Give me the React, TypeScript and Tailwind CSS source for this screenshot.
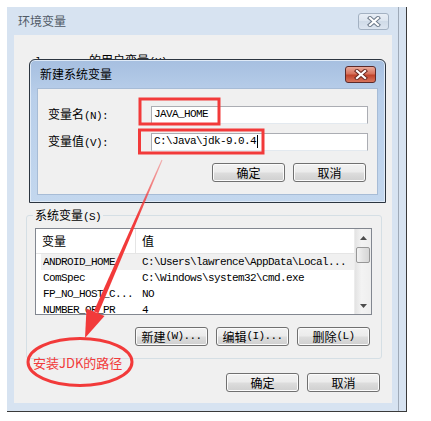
import React from 'react';

const cjk = "font-[family-name:'Noto_Sans_CJK_SC',sans-serif]";
const mono = "font-[family-name:'Liberation_Mono','Noto_Sans_CJK_SC',monospace] text-[11px] tracking-[-0.6px]";

function Btn({ label, keys }: { label: string; keys?: string }) {
  return (
    <div className="flex h-[19px] w-[73px] items-center justify-center rounded-[3px] border border-[#707070] bg-[linear-gradient(#f2f2f2,#ebebeb_48%,#dddddd_52%,#cfcfcf)] text-[12px] leading-none text-black shadow-[inset_0_0_0_1px_#fbfbfb]">
      <span>{label}</span>
      {keys && <span className={mono}>{keys}</span>}
    </div>
  );
}

function CloseX({ red }: { red?: boolean }) {
  return (
    <div
      className={
        red
          ? 'flex h-[17px] w-[31px] items-center justify-center rounded-[3px] border border-[#5b2a2a] bg-[linear-gradient(#e9a99a,#d7725c_45%,#c0432b_55%,#d8745c)]'
          : 'flex h-[17px] w-[31px] items-center justify-center rounded-[3px] border border-[#a3b1c2] bg-[linear-gradient(#e8eef6,#dbe4ef_50%,#d0dbe8_50%,#dce5f0)]'
      }
    >
      <svg width="14" height="11" viewBox="0 0 14 11">
        <path d="M3 2 L11 9 M11 2 L3 9" stroke={red ? '#6a2a22' : '#6f7c8c'} strokeWidth="4.2" strokeLinecap="square" />
        <path d="M3 2 L11 9 M11 2 L3 9" stroke="#ffffff" strokeWidth="2.2" strokeLinecap="square" />
      </svg>
    </div>
  );
}

const rows = [
  ['ANDROID_HOME', 'C:\\Users\\lawrence\\AppData\\Local...'],
  ['ComSpec', 'C:\\Windows\\system32\\cmd.exe'],
  ['FP_NO_HOST_C...', 'NO'],
  ['NUMBER_OF_PR', '4'],
];

function VarList() {
  return (
    <div className="ml-[8px] mt-[5px] flex h-[87px] w-[337px] border border-[#828790] bg-white">
      <div className="flex min-w-0 flex-1 flex-col overflow-hidden">
        <div className="flex h-[25px] shrink-0 items-center border-b border-[#e5e5e5] text-[12px] text-black">
          <div className="flex h-full w-[100px] items-center border-r border-[#e5e5e5] pl-[6px]">变量</div>
          <div className="pl-[6px]">值</div>
        </div>
        <div className="pl-[5px]">
          {rows.map(([k, v], i) => (
            <div
              key={k}
              className={`flex h-[16px] items-center whitespace-nowrap pl-[2px] text-black ${mono} ${
                i === 0 ? 'bg-[#f0f0f0]' : ''
              }`}
            >
              <div className="w-[99px] overflow-hidden">{k}</div>
              <div>{v}</div>
            </div>
          ))}
        </div>
      </div>
      <div className="flex w-[17px] shrink-0 flex-col border-l border-[#ececec] bg-[linear-gradient(90deg,#e3e3e3,#f3f3f3_40%,#eeeeee)]">
        <div className="flex h-[18px] items-center justify-center">
          <svg width="7" height="4" viewBox="0 0 7 4"><path d="M0 4 L3.5 0 L7 4Z" fill="#4d4d4d" /></svg>
        </div>
        <div className="mx-[1px] h-[16px] rounded-[2px] border border-[#979797] bg-[linear-gradient(90deg,#f3f3f3,#e2e2e2_50%,#d6d6d6)]" />
        <div className="flex-1" />
        <div className="flex h-[17px] items-center justify-center">
          <svg width="7" height="4" viewBox="0 0 7 4"><path d="M0 0 L3.5 4 L7 0Z" fill="#4d4d4d" /></svg>
        </div>
      </div>
    </div>
  );
}

function NewVarDialog() {
  return (
    <div className="absolute left-[29px] top-[59px] flex h-[144px] w-[357px] flex-col rounded-t-[6px] border border-[#2c3540] bg-[linear-gradient(#a6bfe0,#b9cfea_25%,#c3d7ee)] shadow-[inset_0_0_0_1px_#dfeaf7]">
      <div className="flex h-[28px] shrink-0 items-center justify-between pl-[10px] pr-[9px]">
        <span className="text-[12px] text-black">新建系统变量</span>
        <CloseX red />
      </div>
      <div className="mx-[7px] mb-[7px] flex flex-1 flex-col border border-[#a7bcd6] bg-[#f0f0f0] text-[12px] text-black">
        <div className="mt-[17px] flex h-[17px] items-center">
          <div className="w-[113px] pl-[10px]">
            变量名<span className={mono}>(N):</span>
          </div>
          <div className="flex h-[18px] w-[217px] items-center border border-[#abadb3] border-b-[#e3e9ef] bg-white pl-[2px]">
            <span className={mono}>JAVA_HOME</span>
          </div>
        </div>
        <div className="mt-[10px] flex h-[17px] items-center">
          <div className="w-[113px] pl-[10px]">
            变量值<span className={mono}>(V):</span>
          </div>
          <div className="flex h-[18px] w-[217px] items-center border border-[#abadb3] border-b-[#e3e9ef] bg-white pl-[2px]">
            <span className={mono}>C:\Java\jdk-9.0.4</span>
            <span className="ml-[1px] h-[13px] w-[1px] bg-black" />
          </div>
        </div>
        <div className="mt-[13px] flex justify-end gap-[8px] pr-[11px]">
          <Btn label="确定" />
          <Btn label="取消" />
        </div>
      </div>
    </div>
  );
}

function Annotations() {
  return (
    <>
      <svg className="pointer-events-none absolute left-0 top-0" width="431" height="421" viewBox="0 0 431 421">
        <defs>
          <linearGradient id="fade" x1="162" y1="160" x2="90" y2="330" gradientUnits="userSpaceOnUse">
            <stop offset="0" stopColor="#f23a3a" stopOpacity="0.35" />
            <stop offset="0.35" stopColor="#f23a3a" stopOpacity="1" />
          </linearGradient>
        </defs>
        <rect x="140" y="99" width="79" height="25" fill="none" stroke="#f23a3a" strokeWidth="3" />
        <rect x="139.5" y="130" width="123.5" height="23" fill="none" stroke="#f23a3a" strokeWidth="3" />
        <polygon points="161.5,159.8 162.5,160.2 98.4,313.3 93.8,311.3" fill="url(#fade)" />
        <polygon points="85,338 104.5,316 86.5,308.5" fill="#f23a3a" />
        <ellipse cx="80" cy="362" rx="52" ry="23.5" fill="none" stroke="#f23a3a" strokeWidth="3" />
      </svg>
      <span className="absolute left-[33px] top-[354px] text-[13px] leading-[18px] text-[#f23a3a]">安装JDK的路径</span>
    </>
  );
}

export default function App() {
  return (
    <div className={`relative h-[421px] w-[431px] overflow-hidden bg-white pl-[7px] pt-[7px] ${cjk}`}>
      <div className="w-[400px] border-b border-[#3a3a3a]">
        <div className="flex h-[404px]">
          <div className="flex w-[392px] flex-col border-r border-[#9ea9b7] bg-[#d7e3f1]">
            <div className="flex h-[28px] shrink-0 items-center justify-between pl-[11px] pr-[9px]">
              <span className="text-[12px] text-[#505a66]">环境变量</span>
              <CloseX />
            </div>
            <div className="mb-[8px] ml-[7px] mr-[6px] flex flex-1 flex-col bg-[#f0f0f0] text-[12px] text-black">
              <div className="ml-[21px] mt-[17px] h-[16px] leading-[16px]">
                <span className={mono}>lawrence </span>的用户变量<span className={mono}>(U)</span>
              </div>
              <fieldset className="ml-[12px] mt-[139px] w-[356px] rounded-[3px] border border-[#d5dfe5] pb-[12px]">
                <legend className="ml-[6px] h-[16px] px-[2px] leading-[16px]">
                  系统变量<span className={mono}>(S)</span>
                </legend>
                <VarList />
                <div className="mt-[12px] flex justify-end gap-[8px] pr-[11px]">
                  <Btn label="新建" keys="(W)..." />
                  <Btn label="编辑" keys="(I)..." />
                  <Btn label="删除" keys="(L)" />
                </div>
              </fieldset>
              <div className="mt-[14px] flex justify-end gap-[8px] pr-[12px]">
                <Btn label="确定" />
                <Btn label="取消" />
              </div>
            </div>
          </div>
          <div className="w-[8px] border-r border-[#3a3a3a] bg-[#d7e3f1]" />
        </div>
      </div>
      <NewVarDialog />
      <Annotations />
    </div>
  );
}
